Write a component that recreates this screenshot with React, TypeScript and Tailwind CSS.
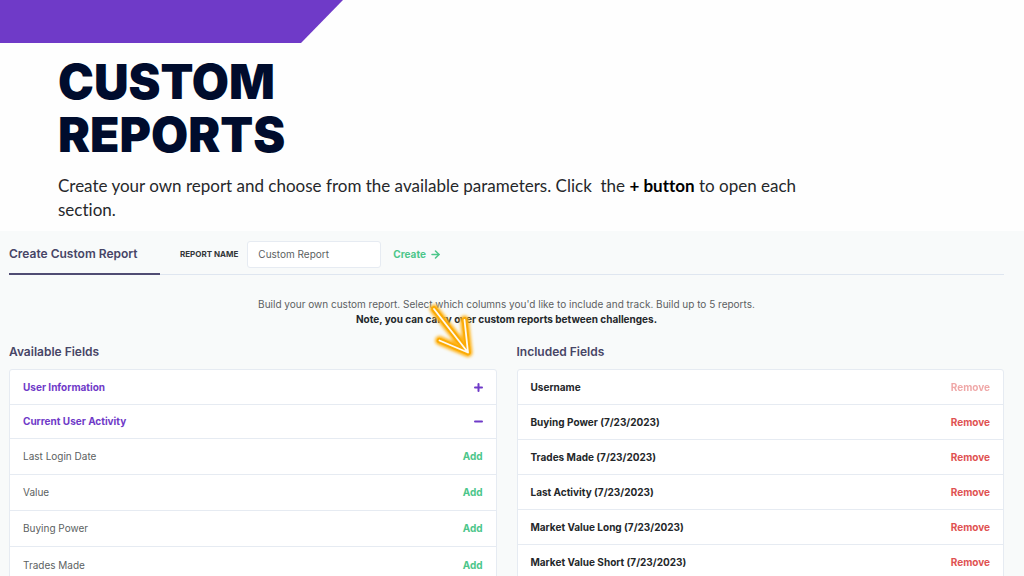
import React, { useState } from "react";
import { ArrowRight, Minus, Plus } from "lucide-react";

interface AvailableGroup {
  title: string;
  fields: string[];
}

interface IncludedField {
  label: string;
  locked?: boolean;
}

const availableGroups: AvailableGroup[] = [
  { title: "User Information", fields: ["Email", "First Name", "Last Name"] },
  {
    title: "Current User Activity",
    fields: ["Last Login Date", "Value", "Buying Power", "Trades Made"],
  },
];

const includedFields: IncludedField[] = [
  { label: "Username", locked: true },
  { label: "Buying Power (7/23/2023)" },
  { label: "Trades Made (7/23/2023)" },
  { label: "Last Activity (7/23/2023)" },
  { label: "Market Value Long (7/23/2023)" },
  { label: "Market Value Short (7/23/2023)" },
];

const PointerArrow = () => (
  <svg
    viewBox="0 0 56 64"
    className="pointer-events-none absolute top-[67px] left-[422px] h-[64px] w-[56px]"
    fill="none"
    strokeLinecap="round"
    strokeLinejoin="round"
    aria-hidden="true"
  >
    <defs>
      <filter id="glow" x="-30%" y="-30%" width="160%" height="160%">
        <feGaussianBlur stdDeviation="1.5" />
      </filter>
    </defs>
    <g stroke="#ffb41a" strokeWidth="9" filter="url(#glow)">
      <path d="M12 11 46 54.5M17.5 42.5 46 54.5 42.5 22" />
    </g>
    <g stroke="#fbab05" strokeWidth="5.5">
      <path d="M12 11 46 54.5M17.5 42.5 46 54.5 42.5 22" />
    </g>
    <g stroke="#fffaf0" strokeWidth="1.8">
      <path d="M12 11 46 54.5M17.5 42.5 46 54.5 42.5 22" />
    </g>
  </svg>
);

const AvailableFields = () => {
  const [openGroup, setOpenGroup] = useState("Current User Activity");

  return (
    <section>
      <h2 className="text-[12px] leading-4 font-semibold text-[#474566]">
        Available Fields
      </h2>
      <div className="mt-[9px] divide-y divide-[#e6ebf2] rounded-t-[3px] border border-[#e6ebf2] bg-white">
        {availableGroups.map(({ title, fields }) => {
          const isOpen = openGroup === title;
          return (
            <div key={title} className="divide-y divide-[#e6ebf2]">
              <button
                onClick={() => setOpenGroup(isOpen ? "" : title)}
                aria-expanded={isOpen}
                className="flex h-[34px] w-full items-center justify-between px-[13px] text-[10px] font-bold text-[#6f3ac8]"
              >
                {title}
                {isOpen ? (
                  <Minus
                    viewBox="3 3 18 18"
                    className="h-[9px] w-[9px]"
                    strokeWidth={4}
                  />
                ) : (
                  <Plus
                    viewBox="3 3 18 18"
                    className="h-[9px] w-[9px]"
                    strokeWidth={4}
                  />
                )}
              </button>
              {isOpen &&
                fields.map((field) => (
                  <div
                    key={field}
                    className="flex h-9 items-center justify-between px-[13px] text-[10px] text-[#5c5f62]"
                  >
                    <span>{field}</span>
                    <button className="font-bold text-[#4cc68a]">Add</button>
                  </div>
                ))}
            </div>
          );
        })}
      </div>
    </section>
  );
};

const IncludedFields = () => (
  <section>
    <h2 className="text-[12px] leading-4 font-semibold text-[#474566]">
      Included Fields
    </h2>
    <ul className="mt-[9px] divide-y divide-[#e6ebf2] rounded-t-[3px] border border-[#e6ebf2] bg-white">
      {includedFields.map(({ label, locked }) => (
        <li
          key={label}
          className="flex h-[35px] items-center justify-between px-[13px] text-[10px] font-bold text-[#24272a]"
        >
          <span>{label}</span>
          <button
            disabled={locked}
            className="text-[#e05252] disabled:opacity-50"
          >
            Remove
          </button>
        </li>
      ))}
    </ul>
  </section>
);

const App: React.FC = () => {
  const [reportName, setReportName] = useState("Custom Report");

  return (
    <main className="flex h-screen flex-col overflow-hidden bg-[#fefefe] font-['Inter','Liberation_Sans',sans-serif]">
      <div className="h-[43px] w-[343px] shrink-0 bg-[#6f3ac8] [clip-path:polygon(0_0,100%_0,301px_100%,0_100%)]" />

      <header className="shrink-0 px-[58px] pt-3 pb-[9px]">
        <h1 className="text-[48px] leading-[53px] font-black text-[#000c2d]">
          CUSTOM
          <br />
          REPORTS
        </h1>
        <p className="mt-[13px] max-w-[750px] font-['Lato','Liberation_Sans',sans-serif] text-[17px] leading-6 text-[#26282b] [font-variant-ligatures:none]">
          {
            "Create your own report and choose from the available parameters. Click\u00a0 the "
          }
          <strong className="text-black">+ button</strong> to open each section.
        </p>
      </header>

      <div className="relative grow bg-[#f8fafa] pr-5 pl-[9px]">
        <div className="flex h-11 items-stretch border-b border-[#dfe6f0]">
          <div className="-mb-px flex w-[151px] items-center border-b-2 border-[#504c73] pt-1 text-[12px] font-semibold text-[#474566]">
            Create Custom Report
          </div>
          <form
            className="ml-5 flex items-center pt-[3px]"
            onSubmit={(e) => e.preventDefault()}
          >
            <label
              htmlFor="report-name"
              className="text-[8px] font-bold text-[#333638]"
            >
              REPORT NAME
            </label>
            <input
              id="report-name"
              value={reportName}
              onChange={(e) => setReportName(e.target.value)}
              className="ml-[9px] h-[27px] w-[134px] rounded-[3px] border border-[#e6ebf2] bg-white px-[10px] text-[10px] text-[#5c5f62]"
            />
            <button className="ml-3 flex items-center gap-[5px] text-[10px] font-bold text-[#4cc68a]">
              Create
              <ArrowRight
                viewBox="3 3 18 18"
                className="h-[9px] w-[9px]"
                strokeWidth={3}
              />
            </button>
          </form>
        </div>

        <p className="mt-[22px] text-center text-[10px] leading-[15px] text-[#5c5f62]">
          Build your own custom report. Select which columns you'd like to
          include and track. Build up to 5 reports.
          <br />
          <strong className="text-[#24272a]">
            Note, you can carry over custom reports between challenges.
          </strong>
        </p>

        <div className="mt-[17px] grid grid-cols-2 items-start gap-5">
          <AvailableFields />
          <IncludedFields />
        </div>

        <PointerArrow />
      </div>
    </main>
  );
};

export default App;
